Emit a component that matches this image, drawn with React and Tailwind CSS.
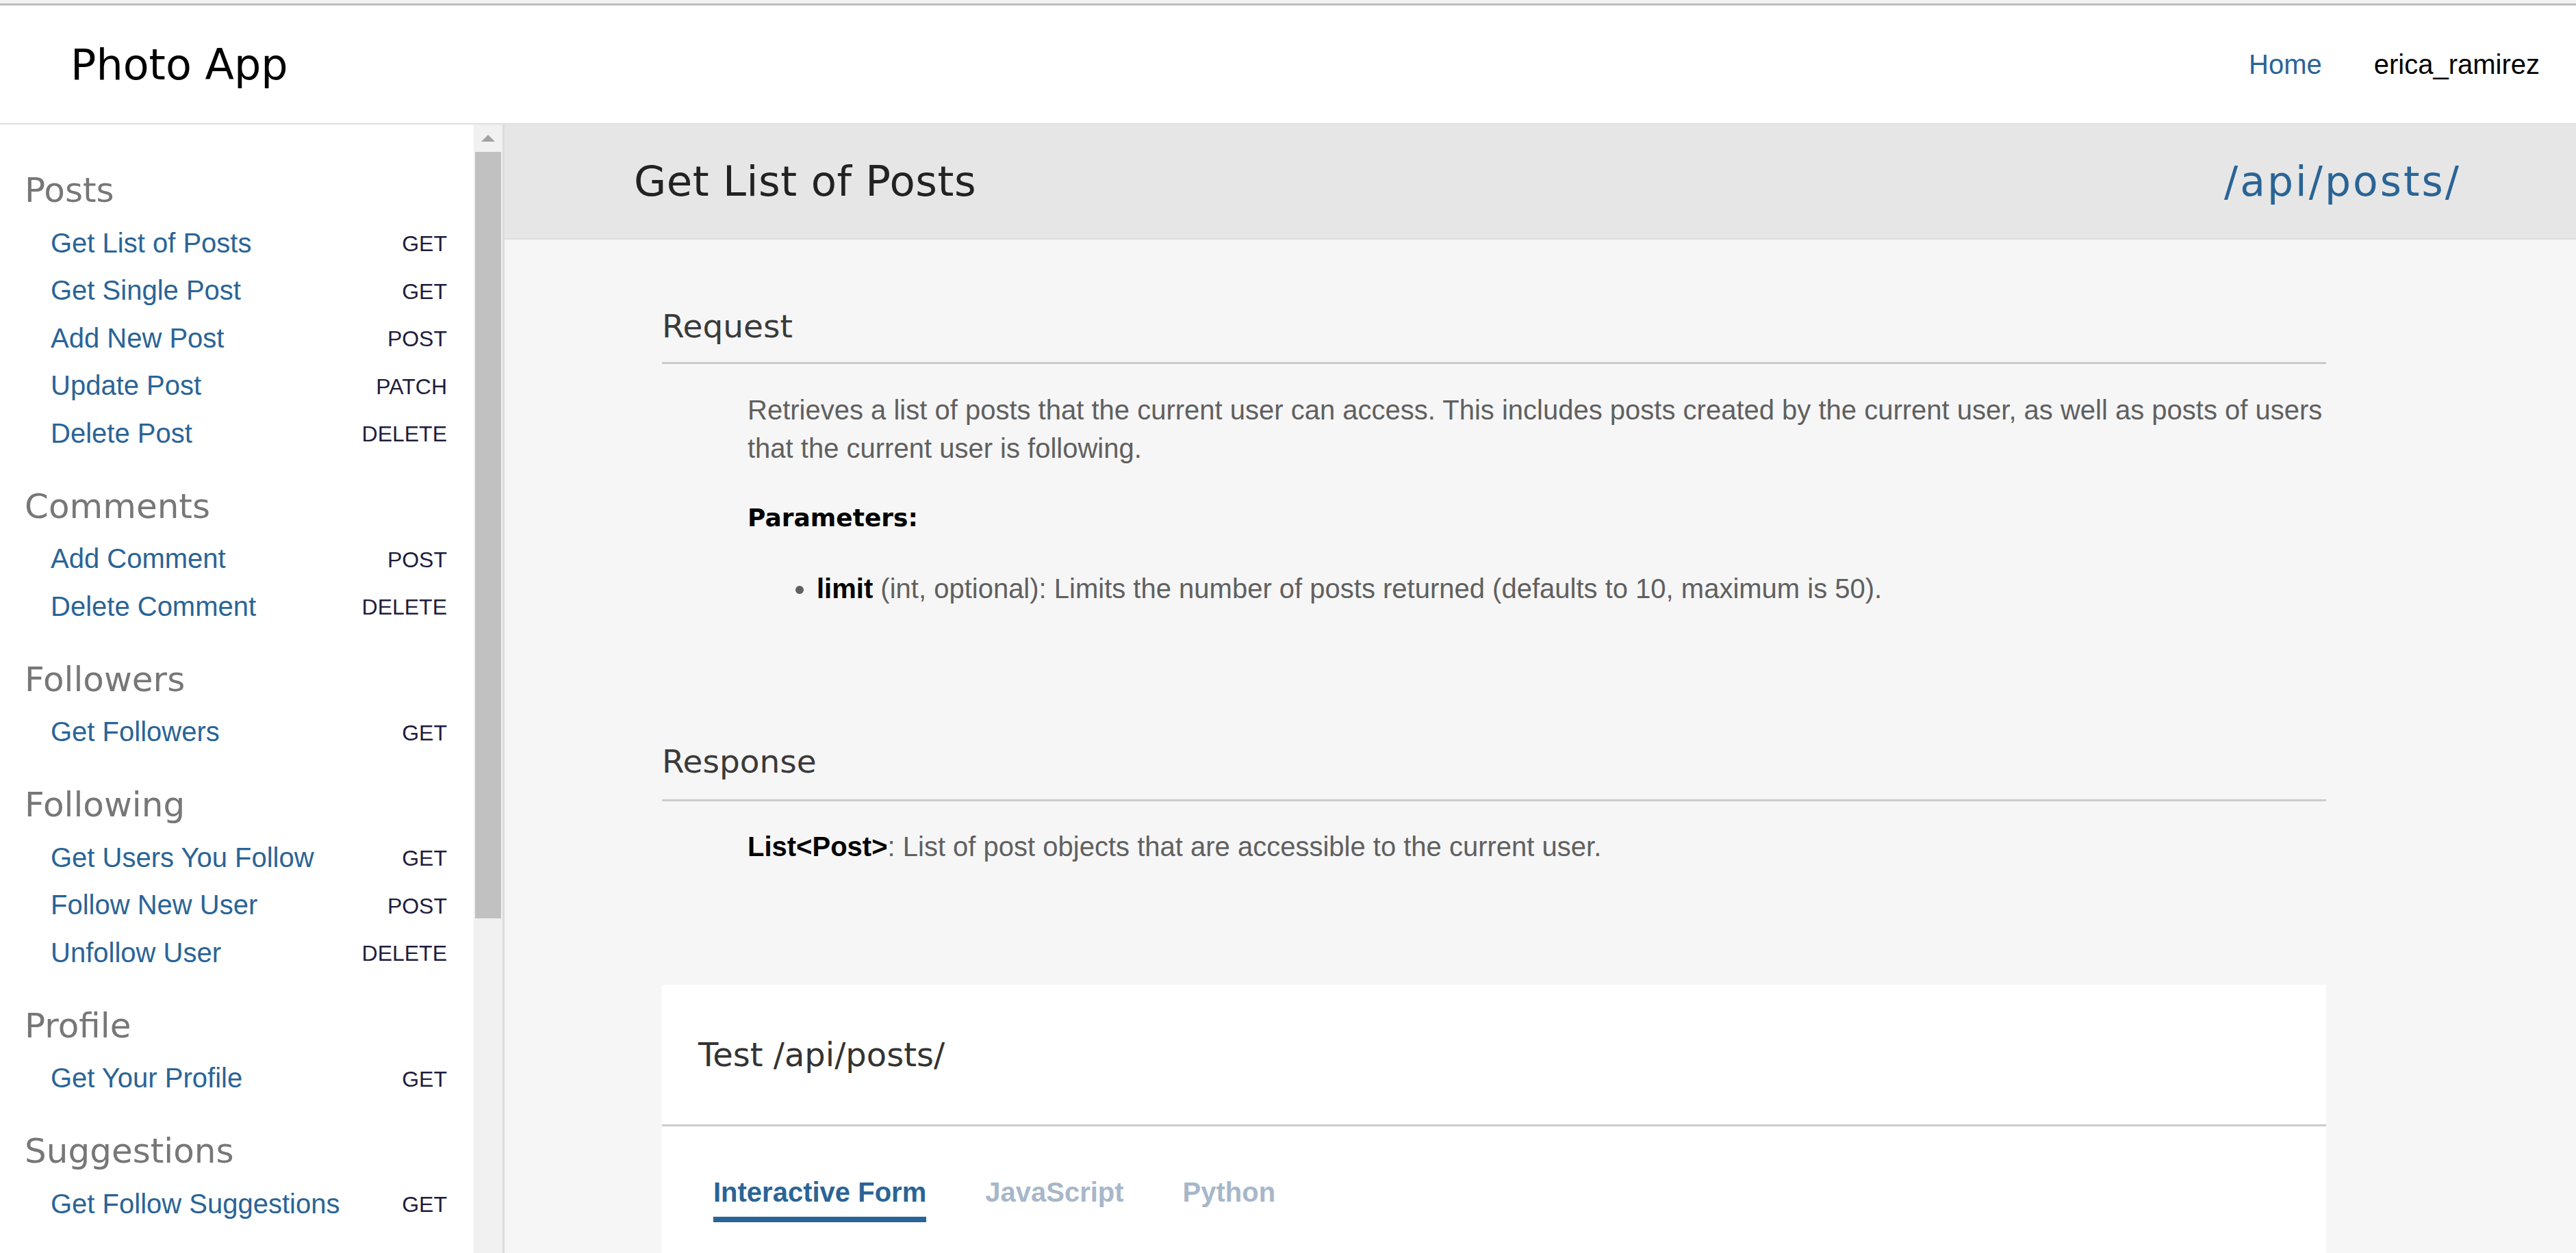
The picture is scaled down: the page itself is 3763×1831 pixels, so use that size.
import React from 'react';

const headFont = { fontFamily: "'DejaVu Sans', sans-serif" };

const sections = [
    {
        title: 'Posts',
        items: [
            ['Get List of Posts', 'GET'],
            ['Get Single Post', 'GET'],
            ['Add New Post', 'POST'],
            ['Update Post', 'PATCH'],
            ['Delete Post', 'DELETE'],
        ],
    },
    {
        title: 'Comments',
        items: [
            ['Add Comment', 'POST'],
            ['Delete Comment', 'DELETE'],
        ],
    },
    { title: 'Followers', items: [['Get Followers', 'GET']] },
    {
        title: 'Following',
        items: [
            ['Get Users You Follow', 'GET'],
            ['Follow New User', 'POST'],
            ['Unfollow User', 'DELETE'],
        ],
    },
    { title: 'Profile', items: [['Get Your Profile', 'GET']] },
    { title: 'Suggestions', items: [['Get Follow Suggestions', 'GET']] },
];

function Sidebar() {
    return (
        <div className="flex shrink-0 h-full">
            <div className="w-[692px] bg-white pt-[55px] overflow-hidden">
                {sections.map((section, i) => (
                    <div key={section.title} className={i > 0 ? 'mt-[31px]' : ''}>
                        <div className="h-[83px] flex items-center pl-[36px] text-[50px] text-[#777777]" style={headFont}>
                            {section.title}
                        </div>
                        {section.items.map(([label, method]) => (
                            <div key={label} className="h-[69.5px] flex items-center justify-between pl-[74px] pr-[39px]">
                                <a className="text-[40px] text-[#2a6496] leading-none">{label}</a>
                                <span className="text-[32px] text-[#1f1d3d] leading-none pt-[3px]">{method}</span>
                            </div>
                        ))}
                    </div>
                ))}
            </div>
            {/* fake scrollbar */}
            <div className="w-[42px] bg-[#f1f1f1] flex flex-col">
                <div className="h-[40px] flex items-center justify-center">
                    <div className="w-0 h-0 border-l-[10px] border-r-[10px] border-b-[10px] border-l-transparent border-r-transparent border-b-[#a3a3a3]" />
                </div>
                <div className="h-[1120px] mx-[2px] bg-[#c1c1c1]" />
            </div>
        </div>
    );
}

function Main() {
    return (
        <div className="flex-1 h-full border-l-[3px] border-[#dcdcdc] bg-[#f6f6f6] overflow-hidden">
            <div className="h-[168px] bg-[#e6e6e6] border-b-[2px] border-[#dcdcdc] flex items-center justify-between pl-[189px] pr-[168px]" style={headFont}>
                <h1 className="text-[61px] text-[#222222] tracking-[0.5px]">Get List of Posts</h1>
                <span className="text-[60px] text-[#2a6496] tracking-[3px]">/api/posts/</span>
            </div>

            <div className="pl-[230px] pr-[365px]">
                <div className="mt-[97px] h-[60px] flex items-center text-[47px] text-[#3a3a3a]" style={headFont}>Request</div>
                <div className="mt-[22px] border-b-[3px] border-[#cccccc]" />
                <div className="pl-[125px]">
                    <p className="mt-[39px] text-[40px] leading-[56px] text-[#606060]">
                        Retrieves a list of posts that the current user can access. This includes posts created by the current user, as well as posts of users that the current user is following.
                    </p>
                    <div className="mt-[49px] h-[50px] flex items-center text-[36px] font-bold text-black" style={headFont}>Parameters:</div>
                    <ul className="mt-[50px] list-disc pl-[101px] text-[40px] leading-[56px] text-[#606060]">
                        <li>
                            <b className="text-black">limit</b> (int, optional): Limits the number of posts returned (defaults to 10, maximum is 50).
                        </li>
                    </ul>
                </div>

                <div className="mt-[195px] h-[60px] flex items-center text-[47px] text-[#3a3a3a]" style={headFont}>Response</div>
                <div className="mt-[25px] border-b-[3px] border-[#cccccc]" />
                <div className="pl-[125px]">
                    <p className="mt-[38px] text-[40px] leading-[56px] text-[#606060]">
                        <b className="text-black">List&lt;Post&gt;</b>: List of post objects that are accessible to the current user.
                    </p>
                </div>

                <div className="mt-[174px] bg-white">
                    <div className="h-[204px] flex items-center pl-[53px] text-[48px] text-[#333333]" style={headFont}>
                        Test /api/posts/
                    </div>
                    <div className="border-b-[3px] border-[#cccccc]" />
                    <div className="flex gap-[86px] pl-[75px] pt-[72px] pb-[60px]">
                        <div className="flex flex-col">
                            <span className="text-[40px] font-bold text-[#2a6496] leading-[48px]">Interactive Form</span>
                            <span className="mt-[12px] h-[8px] bg-[#2a6496]" />
                        </div>
                        <span className="text-[40px] font-bold text-[#a7b7c9] leading-[48px]">JavaScript</span>
                        <span className="text-[40px] font-bold text-[#a7b7c9] leading-[48px]">Python</span>
                    </div>
                </div>
            </div>
        </div>
    );
}

export default function App() {
    return (
        <div className="h-[1831px] flex flex-col overflow-hidden bg-white" style={{ fontFamily: "'Liberation Sans', Arial, sans-serif" }}>
            <div className="h-[5px] bg-[#f2f2f2] border-b-[3px] border-[#bebebe] box-content shrink-0" />
            <header className="h-[172px] shrink-0 border-b-[2px] border-[#dedede] flex items-center justify-between pl-[103px] pr-[53px] box-content">
                <div className="text-[62px] text-black" style={headFont}>Photo App</div>
                <nav className="flex items-center gap-[76px] text-[40px]">
                    <a className="text-[#2a6496]">Home</a>
                    <span className="text-black">erica_ramirez</span>
                </nav>
            </header>
            <div className="flex flex-1 min-h-0">
                <Sidebar />
                <Main />
            </div>
        </div>
    );
}
